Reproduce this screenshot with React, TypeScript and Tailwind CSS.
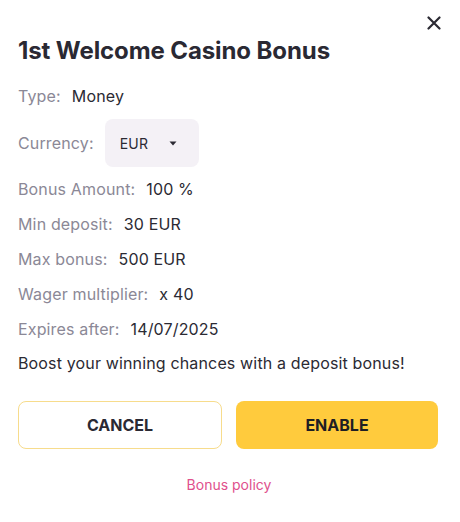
import React from "react";

const rows: [string, string][] = [
  ["Bonus Amount:", "100 %"],
  ["Min deposit:", "30 EUR"],
  ["Max bonus:", "500 EUR"],
  ["Wager multiplier:", "x 40"],
  ["Expires after:", "14/07/2025"],
];

export default function App() {
  return (
    <div className="w-[460px] h-[522px] bg-white relative text-[#2b2a33]" style={{ fontFamily: "Inter, 'Noto Sans', sans-serif" }}>
      <button className="absolute left-[427px] top-[16px] w-[14px] h-[14px] flex items-center justify-center">
        <svg width="14" height="14" viewBox="0 0 14 14">
          <path d="M1.5 1.5 L12.5 12.5 M12.5 1.5 L1.5 12.5" stroke="#2b2a33" strokeWidth="2.2" strokeLinecap="round" />
        </svg>
      </button>
      <div className="px-[18px] pt-[36px]">
        <h1 className="text-[24px] leading-[30px] font-bold tracking-[-0.1px] text-[#2a2933]">1st Welcome Casino Bonus</h1>
        <div className="mt-[20px] flex items-center h-[20px] text-[16px] tracking-[0.15px]">
          <span className="text-[#8b8896]">Type:</span>
          <span className="ml-[11px]">Money</span>
        </div>
        <div className="mt-[13px] flex items-center text-[16px] tracking-[0.15px]">
          <span className="text-[#8b8896]">Currency:</span>
          <div className="ml-[11px] w-[94px] h-[48px] rounded-[8px] bg-[#f4f1f6] flex items-center pl-[15px]">
            <span className="text-[14px]">EUR</span>
            <svg className="ml-[21px]" width="8" height="5" viewBox="0 0 8 5">
              <path d="M0.5 0.5 L7.5 0.5 L4 4.5 Z" fill="#2b2a33" />
            </svg>
          </div>
        </div>
        <div className="mt-[12px] flex flex-col gap-[15px]">
          {rows.map(([k, v]) => (
            <div key={k} className="flex items-center h-[20px] text-[16px] tracking-[0.15px]">
              <span className="text-[#8b8896]">{k}</span>
              <span className="ml-[11px]">{v}</span>
            </div>
          ))}
        </div>
        <p className="mt-[14px] h-[20px] flex items-center text-[16px] tracking-[0.15px]">Boost your winning chances with a deposit bonus!</p>
        <div className="mt-[28px] flex gap-[14px]">
          <button className="w-[204px] h-[48px] rounded-[8px] border border-[#f7dc8c] bg-white text-[16px] font-bold text-[#2a2933]">CANCEL</button>
          <button className="w-[202px] h-[48px] rounded-[8px] bg-[#ffcb3d] text-[16px] font-bold text-[#1f1e24]">ENABLE</button>
        </div>
        <div className="mt-[23px] text-center pr-[2px]">
          <a className="text-[14px] text-[#e0508c]">Bonus policy</a>
        </div>
      </div>
    </div>
  );
}
